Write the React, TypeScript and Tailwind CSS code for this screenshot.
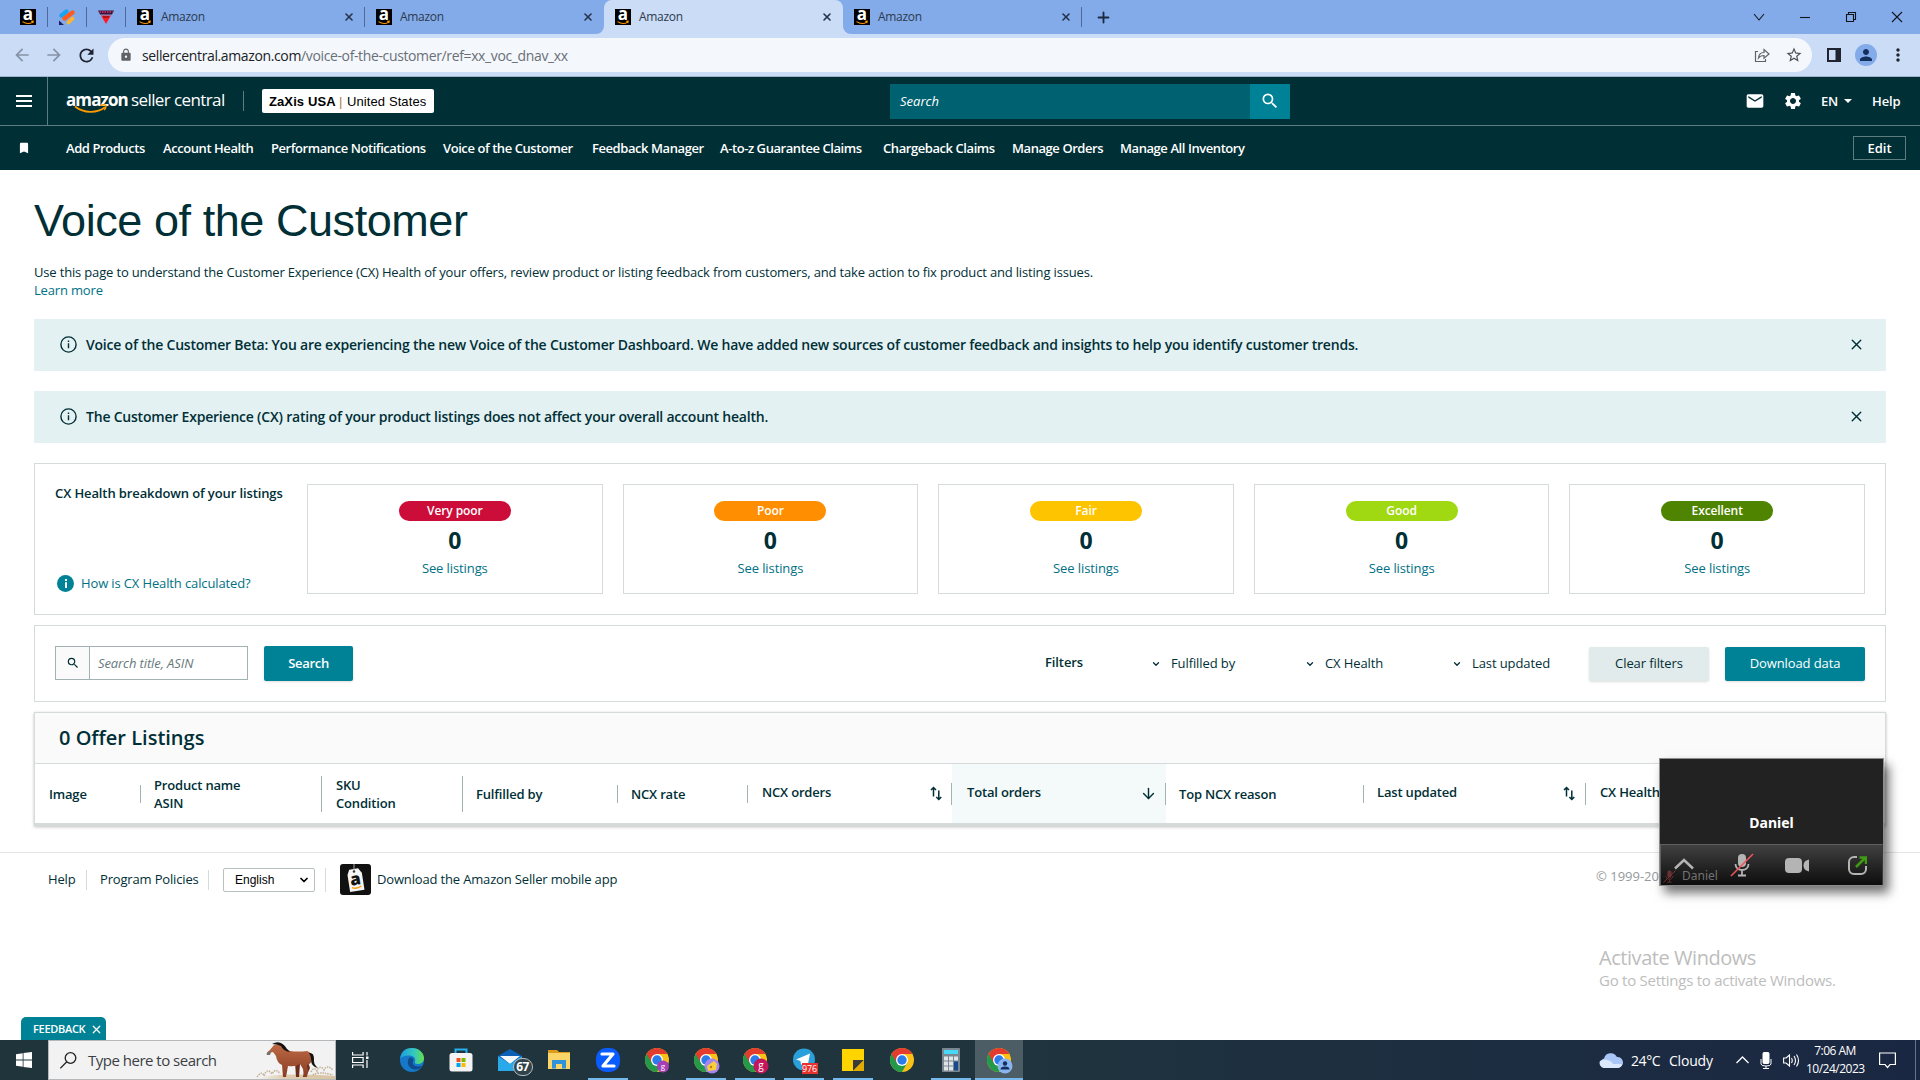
import type { ReactNode } from "react";
import { ArrowDown, ChevronDown, Plus, X } from "lucide-react";
import { MdArrowBack, MdArrowForward, MdBookmark, MdEmail, MdLock, MdMoreVert, MdPerson, MdRefresh, MdSearch, MdSettings, MdStarBorder } from "react-icons/md";

const NAV = [
  { label: "Add Products", cls: "w-[97px]" },
  { label: "Account Health", cls: "w-[108px]" },
  { label: "Performance Notifications", cls: "w-[172px]" },
  { label: "Voice of the Customer", cls: "w-[149px]" },
  { label: "Feedback Manager", cls: "w-[128px]" },
  { label: "A-to-z Guarantee Claims", cls: "w-[163px]" },
  { label: "Chargeback Claims", cls: "w-[129px]" },
  { label: "Manage Orders", cls: "w-[108px]" },
  { label: "Manage All Inventory", cls: "w-[130px]" },
];

const RATINGS = [
  { label: "Very poor", color: "bg-[#cc0c39]" },
  { label: "Poor", color: "bg-[#ff8f00]" },
  { label: "Fair", color: "bg-[#ffc400]" },
  { label: "Good", color: "bg-[#a0d911]" },
  { label: "Excellent", color: "bg-[#4f8400]" },
];

function AmazonFavicon() {
  return (
    <svg className="shrink-0 overflow-visible" width="16" height="16" viewBox="0 0 16 16" fill="none">
      <rect width="16" height="16" fill="#000" />
      <text x="8" y="11" textAnchor="middle" fontSize="17" fontWeight="700" fontFamily="Open Sans" fill="#fff">a</text>
      <path d="M2.500 12.600c3.200 2.200 7.400 2.300 10.400.5M11.200 12.400l2-.2-.4 1.900" stroke="#f90" strokeWidth="1.100" />
    </svg>
  );
}

function Tab({ active = false, divider = false }: { active?: boolean; divider?: boolean }) {
  return (
    <div className={active ? "relative flex h-[34px] w-[239px] items-center rounded-t-lg bg-[#cbdcf6] pl-[11px]" : "relative flex h-[34px] w-[239px] items-center pl-[11px]"}>
      <AmazonFavicon />
      <span className="ml-2 flex-1 text-[12px] tracking-[-0.3px] text-[#2b3a4f]">Amazon</span>
      <X size={12} strokeWidth={3.2} className="mr-[10px] text-[#24344a]" />
      {divider && <span className="absolute top-[7px] right-0 h-5 w-px bg-[#4f6a9a]" />}
      {active && (
        <>
          <svg className="absolute bottom-0 -left-2" width="8" height="8" viewBox="0 0 8 8"><path d="M8 0v8H0a8 8 0 0 0 8-8z" fill="#cbdcf6" /></svg>
          <svg className="absolute -right-2 bottom-0" width="8" height="8" viewBox="0 0 8 8"><path d="M0 0v8h8a8 8 0 0 1-8-8z" fill="#cbdcf6" /></svg>
        </>
      )}
    </div>
  );
}

function PinnedTab({ children }: { children: ReactNode }) {
  return <div className="flex h-5 w-[39px] items-center justify-center border-r border-[#4f6a9a]">{children}</div>;
}

function TabStrip() {
  return (
    <div className="flex h-[34px] items-center bg-[#84abe9]">
      <div className="ml-[9px] flex">
        <PinnedTab><AmazonFavicon /></PinnedTab>
        <PinnedTab>
          <svg width="16" height="16" viewBox="0 0 16 16">
            <path d="M2.500 6.500 7.500 2.500" stroke="#18a4f5" strokeWidth="4.400" strokeLinecap="round" />
            <path d="m5.500 9.500 8-6" stroke="#ff5a1f" strokeWidth="4.400" strokeLinecap="round" />
            <path d="m9.500 13.500 4-4" stroke="#ffb52e" strokeWidth="3.800" strokeLinecap="round" />
            <path d="M0 11.500 5 16H0z" fill="#1b1c63" />
          </svg>
        </PinnedTab>
        <PinnedTab>
          <svg width="16" height="16" viewBox="0 0 16 16">
            <path d="M0 1.500h16l-2 4H2z" fill="#37133a" />
            <path d="M1.500 3h13" stroke="#e4356b" strokeWidth="1.500" strokeDasharray="1.500 1" />
            <path d="M3 6.500h10L8 15z" fill="#ff1a24" />
            <path d="M5 8h6" stroke="#5d0f14" strokeWidth="1" />
          </svg>
        </PinnedTab>
      </div>
      <Tab divider />
      <Tab />
      <Tab active />
      <Tab divider />
      <Plus size={17} strokeWidth={2.6} className="ml-[13px] text-[#1b2a40]" />
      <svg className="mr-1 ml-auto" width="168" height="28" viewBox="0 0 168 28" fill="none" stroke="#10151d" strokeWidth="1.100">
        <path d="m6 11 5 6 5-6" />
        <path d="M52 14.500h10" />
        <path d="M98.500 11.500h7v7h-7zM100.500 11.500v-2h7v7h-2" />
        <path d="m144 9 10 10M154 9l-10 10" />
      </svg>
    </div>
  );
}

function AddressBar() {
  return (
    <div className="flex h-[43px] items-center border-b border-[#9fb3cb] bg-[#cbdcf6] text-[#1f2430]">
      <MdArrowBack size={20} className="ml-3 text-[#8792a5]" />
      <MdArrowForward size={20} className="ml-3 text-[#8792a5]" />
      <MdRefresh size={21} className="ml-[12px]" />
      <div className="ml-[11px] flex h-[34px] w-[1704px] items-center rounded-full bg-[#f4f8fd] pl-[11px] text-[14px]">
        <MdLock size={14} className="text-[#5f6368]" />
        <span className="ml-[9px] tracking-[-0.37px] text-[#202124]">
          sellercentral.amazon.com<span className="text-[#6a6f76]">/voice-of-the-customer/ref=xx_voc_dnav_xx</span>
        </span>
        <svg className="ml-auto" width="16" height="16" viewBox="0 0 16 16" fill="none" stroke="#5f6368" strokeWidth="1.200">
          <path d="M4 4.500H1.500v10h10V12" />
          <path d="M4.500 11c.3-3.600 2.200-5.400 5.500-5.500V2.500L15 7l-5 4.300V8.500c-2.500 0-4.200.7-5.500 2.500z" />
        </svg>
        <MdStarBorder size={18} className="mr-[9px] ml-[15px] text-[#4d5258]" />
      </div>
      <svg className="ml-[15px]" width="14" height="14" viewBox="0 0 14 14">
        <path d="M1 1h12v12H1z" fill="none" stroke="#1f2430" strokeWidth="2" />
        <path d="M8.500 0H14v14H8.500z" fill="#1f2430" />
      </svg>
      <span className="ml-[14px] flex h-[22px] w-[22px] items-center justify-center rounded-full bg-[#84abe9]">
        <MdPerson size={18} className="text-[#14305e]" />
      </span>
      <MdMoreVert size={20} className="ml-[11px]" />
    </div>
  );
}

function SellerHeader() {
  return (
    <header className="bg-[#002f36] font-['Open_Sans',sans-serif] text-white">
      <div className="flex h-[49px] items-center border-b border-[#5b7d80]">
        <div className="flex h-full w-12 items-center border-r border-[#5b7d80] pl-4">
          <div className="flex w-4 flex-col gap-[3px]">
            <span className="h-[2px] bg-white" />
            <span className="h-[2px] bg-white" />
            <span className="h-[2px] bg-white" />
          </div>
        </div>
        <div className="relative ml-[18px] flex w-[160px] items-baseline pb-[3px] text-[17px] whitespace-nowrap">
          <span className="w-[65px] font-bold tracking-[-0.9px]">amazon</span>
          <span className="tracking-[-0.6px]">seller central</span>
          <svg className="absolute top-[17px] left-[8px]" width="36" height="12" viewBox="0 0 36 12" fill="none" stroke="#f90" strokeWidth="1.800">
            <path d="M1 2.500c9 7 22 7 30 .8" />
            <path d="M26.500 1.500c2.200-.8 4.300-.9 5.300-.2.500 1.200-.2 3-1.500 4.800" strokeWidth="1.400" />
          </svg>
        </div>
        <span className="ml-[17px] h-5 w-px bg-[#5b7d80]" />
        <div className="ml-[18px] flex h-6 w-[172px] items-center rounded-[2px] bg-white pt-px pl-[7px] font-['Liberation_Sans',Arial,sans-serif] text-[13px] whitespace-nowrap text-black">
          <b className="w-[70px] tracking-[0.1px]">ZaXis USA</b>
          <span className="w-[8px] text-[#b07a45]">|</span>
          <span className="tracking-[0.1px]">United States</span>
        </div>
        <div className="ml-[456px] flex h-[35px] w-[360px] items-center bg-[#006170] pt-px pl-[10px] text-[13px] text-white italic">Search</div>
        <div className="flex h-[35px] w-10 items-center justify-center bg-[#008296]"><MdSearch size={20} /></div>
        <MdEmail size={20} className="ml-[455px]" />
        <MdSettings size={20} className="ml-[18px]" />
        <span className="ml-[18px] w-[18px] pt-[2px] text-[13px] font-semibold tracking-[-0.2px]">EN</span>
        <span className="ml-[5px] border-x-4 border-t-4 border-x-transparent border-t-white" />
        <span className="ml-[20px] pt-[2px] text-[13px] font-semibold tracking-[-0.1px]">Help</span>
      </div>
      <div className="flex h-11 items-center text-[13px] font-semibold">
        <MdBookmark size={14} className="ml-[17px]" />
        <nav className="ml-[35px] flex pt-[2px] whitespace-nowrap">
          {NAV.map((n) => (
            <span key={n.label} className={`${n.cls} tracking-[-0.43px]`}>{n.label}</span>
          ))}
        </nav>
        <span className="mr-[14px] ml-auto flex h-6 w-[53px] items-center justify-center border border-[#5b7d80] pt-px">Edit</span>
      </div>
    </header>
  );
}

function InfoCircle() {
  return (
    <svg width="17" height="17" viewBox="0 0 17 17" fill="none" stroke="#002f36" strokeWidth="1.400">
      <circle cx="8.500" cy="8.500" r="7.600" />
      <path d="M8.500 7.300v5M8.500 4.500v1.500" />
    </svg>
  );
}

function Notice({ children }: { children: ReactNode }) {
  return (
    <div className="flex h-[52px] items-center bg-[#e4f1f3] pr-[21px] pb-[2px] pl-[26px] text-[14px] font-semibold">
      <InfoCircle />
      <span className="ml-[9px] flex-1 pt-px tracking-[-0.21px]">{children}</span>
      <X size={17} strokeWidth={1.9} />
    </div>
  );
}

function Breakdown() {
  return (
    <section className="mt-5 flex h-[152px] border border-[#d5dbdb] pt-5 pr-5 pl-5">
      <div className="flex h-[109px] w-[252px] flex-col justify-between text-[13px]">
        <p className="tracking-[-0.11px] font-semibold">CX Health breakdown of your listings</p>
        <p className="flex items-center gap-[7px] tracking-[-0.13px] text-[#007185]">
          <span className="ml-[2px] flex h-[17px] w-[17px] items-center justify-center rounded-full bg-[#008296]">
            <svg width="4" height="9" viewBox="0 0 4 9" fill="#fff"><path d="M1 0h2v2H1zM1 3.200h2V9H1z" /></svg>
          </span>
          How is CX Health calculated?
        </p>
      </div>
      <div className="flex h-[110px] flex-1 gap-5">
        {RATINGS.map((r) => (
          <div key={r.label} className="flex flex-1 flex-col items-center border border-[#d5dbdb] pt-4">
            <span className={`${r.color} flex h-5 w-28 items-center justify-center rounded-[10px] text-[12px] font-semibold tracking-[-0.1px] text-white`}>{r.label}</span>
            <span className="mt-[3px] text-[23px] leading-8 font-bold">0</span>
            <span className="mt-[2px] text-[13px] leading-5 tracking-[-0.1px] text-[#007185]">See listings</span>
          </div>
        ))}
      </div>
    </section>
  );
}

function Filters() {
  return (
    <section className="mt-[10px] flex h-[77px] items-center border border-[#d5dbdb] px-5 text-[13px] tracking-[-0.1px]">
      <div className="mb-px flex h-[34px] w-[193px] border border-[#a3b1b3]">
        <span className="flex w-[34px] items-center justify-center border-r border-[#a3b1b3] bg-[#fafafa]"><MdSearch size={14} /></span>
        <span className="flex flex-1 items-center pt-px pl-2 tracking-[-0.1px] text-[#66797c] italic">Search title, ASIN</span>
      </div>
      <button className="ml-4 h-[35px] w-[89px] rounded-[2px] bg-[#008296] font-semibold tracking-[-0.3px] text-white shadow-sm">Search</button>
      <b className="mr-[67px] mb-px ml-auto w-[39px] font-semibold">Filters</b>
      <span className="flex w-[154px] items-center gap-[10px] pt-px"><ChevronDown size={10} strokeWidth={3} />Fulfilled by</span>
      <span className="flex w-[147px] items-center gap-[10px] pt-px"><ChevronDown size={10} strokeWidth={3} />CX Health</span>
      <span className="flex w-[137px] items-center gap-[10px] pt-px"><ChevronDown size={10} strokeWidth={3} />Last updated</span>
      <button className="h-[34px] w-[120px] rounded-[2px] bg-[#e2ebeb] pt-px shadow-sm">Clear filters</button>
      <button className="ml-4 h-[34px] w-[140px] rounded-[2px] bg-[#008296] pt-px font-medium text-white shadow-sm">Download data</button>
    </section>
  );
}

function SortIcon() {
  return (
    <svg width="12" height="15" viewBox="0 0 12 15" fill="none" stroke="#002f36" strokeWidth="1.500">
      <path d="M3.500 10.500V1.500M1 4l2.500-2.500L6 4M8.800 4.500v9M6.300 11l2.500 2.500 2.500-2.500" />
    </svg>
  );
}

function Listings() {
  return (
    <section className="mt-[10px] h-[114px] border border-b-[3px] border-[#d5dbdb] shadow-[0_1px_3px_rgba(0,0,0,0.25)]">
      <h2 className="flex h-[51px] items-center border-b border-[#d5dbdb] bg-[#fafafa] pl-6 text-[20px] font-semibold">0 Offer Listings</h2>
      <div className="grid h-[59px] grid-cols-[106px_181px_141px_155px_130px_204px_214px_198px_222px_1fr] items-center text-[13px] leading-[18px] font-semibold tracking-[-0.18px]">
        <div className="flex h-[18px] items-center border-r border-[#a3b1b3] pl-[14px]">Image</div>
        <div className="flex h-9 items-center border-r border-[#a3b1b3] pl-[13px]">Product name<br />ASIN</div>
        <div className="flex h-9 items-center border-r border-[#a3b1b3] pl-[14px]">SKU<br />Condition</div>
        <div className="flex h-[18px] items-center border-r border-[#a3b1b3] pl-[13px]">Fulfilled by</div>
        <div className="flex h-[18px] items-center border-r border-[#a3b1b3] pl-[13px]">NCX rate</div>
        <div className="flex h-[22px] items-center justify-between border-r border-[#a3b1b3] pr-[9px] pl-[14px]"><span className="pb-[3px]">NCX orders</span><SortIcon /></div>
        <div className="flex h-full items-center bg-[#f4f9fa]">
          <div className="flex h-[22px] flex-1 items-center justify-between border-r border-[#a3b1b3] pr-[8px] pl-[15px]"><span className="pb-[3px]">Total orders</span><ArrowDown size={17} strokeWidth={2} /></div>
        </div>
        <div className="flex h-[18px] items-center border-r border-[#a3b1b3] pl-[13px]">Top NCX reason</div>
        <div className="flex h-[22px] items-center justify-between border-r border-[#a3b1b3] pr-[10px] pl-[13px]"><span className="pb-[3px]">Last updated</span><SortIcon /></div>
        <div className="pb-[3px] pl-[14px]">CX Health</div>
      </div>
    </section>
  );
}

function Footer() {
  return (
    <footer className="mt-[26px] flex h-[54px] items-center border-t border-[#e3e6e6] pl-12 text-[13px] tracking-[-0.16px]">
      <span className="flex h-5 w-[39px] items-center border-r border-[#d5dbdb]">Help</span>
      <span className="flex h-5 w-[122px] items-center border-r border-[#d5dbdb] pl-[13px]">Program Policies</span>
      <span className="ml-[14px] flex h-6 w-[92px] items-center justify-between rounded-[2px] border border-[#b9c0c0] pr-1 pl-[11px] font-['Liberation_Sans',Arial,sans-serif] text-[12px] tracking-normal text-black">
        English<ChevronDown size={12} strokeWidth={3.5} />
      </span>
      <span className="mr-[14px] ml-[10px] h-6 w-px bg-[#d5dbdb]" />
      <svg width="31" height="31" viewBox="0 0 31 31">
        <rect width="31" height="31" rx="3" fill="#111" />
        <g transform="rotate(-9 15 17)">
          <path d="m11 5 9 0 3 5v17H8.500V10z" fill="#f5f5f5" />
          <circle cx="15.500" cy="7.500" r="1.300" fill="#333" />
          <text x="15.500" y="21" textAnchor="middle" fontSize="17" fontWeight="800" fontFamily="Open Sans" fill="#111">a</text>
          <path d="M11 23c3 1.800 6 1.800 9.500 0" stroke="#f90" strokeWidth="1.300" fill="none" />
        </g>
        <path d="M14 0v6" stroke="#aaa" strokeWidth="1" />
      </svg>
      <span className="ml-[6px] w-[241px] whitespace-nowrap">Download the Amazon Seller mobile app</span>
      <span className="mb-[5px] ml-[978px] whitespace-nowrap tracking-normal text-[#949a9c]">© 1999-20</span>
    </footer>
  );
}

function MutedMic({ size, className, color = "#b4b4b4" }: { size: number; className?: string; color?: string }) {
  return (
    <svg className={className} width={size} height={size} viewBox="0 0 24 24" fill="none">
      <rect x="8" y="1" width="8" height="13" rx="4" fill={color} />
      <path d="M5.500 11c0 8 13 8 13 0M12 17v5M8 22.500h8" stroke={color} strokeWidth="1.800" />
      <path d="M1 23 23 1" stroke="#f0535b" strokeWidth="1.600" />
    </svg>
  );
}

function MeetingWindow() {
  return (
    <div className="absolute top-[758px] left-[1659px] flex h-[128px] w-[225px] flex-col border border-[#8d8d8d] bg-[#222] font-['Noto_Sans',sans-serif] shadow-[5px_7px_10px_rgba(0,0,0,0.55)]">
      <div className="flex flex-1 items-end justify-center pb-[11px] text-[14px] font-bold text-white">Daniel</div>
      <div className="relative flex h-[41px] items-center border border-b-0 border-[#606060] border-r-[#3a3a3a] bg-linear-to-b from-[#414141] to-[#0e0e0e]">
        <svg className="mb-[3px] ml-[13px]" width="20" height="12" viewBox="0 0 20 12" fill="none" stroke="#b4b4b4" strokeWidth="2.500"><path d="m1 10.500 9-8.500 9 8.500" /></svg>
        <MutedMic size={24} className="ml-[36px]" />
        <svg className="ml-[31px]" width="25" height="15" viewBox="0 0 25 15" fill="#b4b4b4"><rect width="17" height="15" rx="4" /><path d="M24 1.500v12c-4-1-5.500-3-5.500-6s1.500-5 5.500-6z" /></svg>
        <svg className="ml-[38px]" width="19" height="19" viewBox="0 0 19 19" fill="none" strokeWidth="2">
          <path d="M9 1H6a5 5 0 0 0-5 5v7a5 5 0 0 0 5 5h7a5 5 0 0 0 5-5v-3" stroke="#b4b4b4" />
          <path d="m8 11 9-9M11.500 1.500H18V8" stroke="#3f9a14" strokeWidth="2.500" />
        </svg>
        <div className="absolute bottom-0 left-[2px] flex items-center gap-[6px] text-[12px] opacity-50">
          <MutedMic size={13} color="#b8444a" />
          <span className="text-[#c8c8c8]">Daniel</span>
        </div>
      </div>
    </div>
  );
}

function Chrome({ children }: { children?: ReactNode }) {
  return (
    <svg width="28" height="28" viewBox="0 0 28 28">
      <circle cx="14" cy="14" r="12" fill="#fbc116" />
      <path d="M3.600 8A12 12 0 0 0 14 26l5.200-9z" fill="#229a49" />
      <path d="M14 8h10.400L19 17z" fill="#fbc116" />
      <path d="M3.600 8A12 12 0 0 1 24.400 8H14l-5.200 9z" fill="#e33b2e" />
      <circle cx="14" cy="14" r="6" fill="#fff" />
      <circle cx="14" cy="14" r="4.700" fill="#2b7bea" />
      {children}
    </svg>
  );
}

function Task({ open = false, active = false, children }: { open?: boolean; active?: boolean; children: ReactNode }) {
  return (
    <div className={active ? "flex h-10 w-12 flex-col items-center justify-end bg-[#4d5d66]" : "flex h-10 w-[49px] flex-col items-center justify-end"}>
      <div className="flex flex-1 items-center pt-[2px]">{children}</div>
      <span className={active ? "h-[2px] w-full bg-[#76b9ed]" : open ? "h-[2px] w-10 bg-[#76b9ed]" : "h-[2px]"} />
    </div>
  );
}

function Horse() {
  return (
    <svg width="80" height="37" viewBox="0 0 80 37">
      <defs>
        <linearGradient id="coat" x1="0" y1="0" x2="0" y2="1"><stop offset="0" stopColor="#bd6a45" /><stop offset="1" stopColor="#8a3d24" /></linearGradient>
        <linearGradient id="ground" x1="0" x2="1"><stop offset="0" stopColor="#f2f2f2" /><stop offset=".35" stopColor="#dfcdb2" /><stop offset="1" stopColor="#d9c4a2" /></linearGradient>
      </defs>
      <path d="M2 37q16-7 78-3v3z" fill="url(#ground)" />
      <path d="M2 35q5-7 7-1 3-9 8-2 4-7 8 0M56 30q3-6 6-1 3-7 7-1 3-6 9 0M58 33q6-4 20 0" stroke="#c3b096" fill="none" strokeWidth="1.600" strokeDasharray="1.500 1" />
      <path d="m40 20 1 15h3l1-13zM53 20l2 6-4 9h-3l2-9-3-5z" fill="#6b2d1a" />
      <path d="M12 13q-1-2 2-4l5-6q5-2 9 1 4 4 7 5 8 1 17 0 6 2 5 9-1 4-5 5l1 6-1 6h-3l-1-8-3-5q-4 3-12 2l-2 11h-3l-1-12q-5-2-6-9l-3-4q-3 0-6 3-2 0-3 0z" fill="url(#coat)" />
      <path d="M12 13q-1-2 2-4l2 1-1 3z" fill="#77706c" />
      <path d="M17 2q9-5 15 5l3 3q-7-1-9-6-4-2-9-2z" fill="#141110" />
      <path d="M54 11q5-1 5 6-1 5 4 9-7-1-7-9 0-3-2-6z" fill="#141110" />
    </svg>
  );
}

function Taskbar() {
  return (
    <div className="flex h-10 items-center bg-linear-to-r from-[#20343c] via-[#20343e] to-[#1a2742] text-white">
      <svg className="ml-4" width="16" height="16" viewBox="0 0 16 16" fill="#fff">
        <path d="m0 2.200 6.700-.9v6.300H0zM7.500 1.100 16 0v7.600H7.500zM0 8.400h6.700v6.300L0 13.800zM7.500 8.400H16V16l-8.500-1.100z" />
      </svg>
      <div className="ml-4 flex h-10 w-72 items-center border border-[#b4b8ba] bg-[#f2f2f2] pl-[11px] text-[15px] text-[#3b3f45]">
        <svg width="17" height="17" viewBox="0 0 17 17" fill="none" stroke="#222" strokeWidth="1.300"><circle cx="10.500" cy="6" r="5.300" /><path d="m6.800 9.800-6.500 6.500" /></svg>
        <span className="ml-[11px] w-[130px] pt-px tracking-[-0.5px] whitespace-nowrap">Type here to search</span>
        <span className="ml-auto"><Horse /></span>
      </div>
      <div className="flex h-10 w-[51px] items-center pl-4">
        <svg width="17" height="16" viewBox="0 0 17 16" fill="none" stroke="#fff" strokeWidth="1.200"><path d="M.600 0v3h10.500V0M.600 16v-3h10.500v3M.600 5.500h10.500v5H.600zM15 0v3.500M15 8v8" /><path d="M14 4.500h2.500v2.500H14z" fill="#fff" stroke="none" /></svg>
      </div>
      <Task>
        <svg width="24" height="24" viewBox="0 0 24 24">
          <defs>
            <linearGradient id="edgeTop" x1="0" x2="1"><stop offset="0" stopColor="#1b9de2" /><stop offset=".6" stopColor="#35c9bd" /><stop offset="1" stopColor="#66de4c" /></linearGradient>
          </defs>
          <circle cx="12" cy="12" r="12" fill="#1578c9" />
          <path d="M0 11C1 3 6 0 12 0c7 0 12 5 12 10 0 4-3 6-6.500 6-2 0-3.500-1-2.500-2.500C16 11 14 7.500 9.500 7.500 5 7.500 1 9 0 11z" fill="url(#edgeTop)" />
          <path d="M9 10c-3 5 0 11 6 11.500 3 .2 6-1.500 7.500-4-3 1.500-8 1.500-9.500-1.500-.8-2 .5-3.500.5-4.500C13 10 10 9 9 10z" fill="#114a8b" />
        </svg>
      </Task>
      <Task>
        <svg width="24" height="24" viewBox="0 0 24 24">
          <path d="M6.500 6V1.500h11V6" fill="none" stroke="#26b0ee" strokeWidth="2" />
          <rect x=".5" y="5" width="23" height="18.500" rx="2.500" fill="#f3f3f3" />
          <path d="M7.500 10h4v4h-4z" fill="#f25022" /><path d="M12.500 10h4v4h-4z" fill="#7fba00" /><path d="M7.500 15h4v4h-4z" fill="#00a4ef" /><path d="M12.500 15h4v4h-4z" fill="#ffb900" />
        </svg>
      </Task>
      <Task>
        <div className="relative">
          <svg width="24" height="22" viewBox="0 0 24 22"><path d="m0 7 12-7 12 7v15H0z" fill="#0c60b5" /><path d="M2 7h20l-10 8z" fill="#f4f8fb" /><path d="m0 7 12 8 12-8v15H0z" fill="#29a9ea" /></svg>
          <span className="absolute top-[9px] left-[15px] flex h-[18px] w-[20px] items-center justify-center rounded-full border border-[#b7bec2] bg-[#31434b] text-[12px] font-bold tracking-[-0.5px]">67</span>
        </div>
      </Task>
      <Task>
        <svg width="22" height="20" viewBox="0 0 22 20"><path d="M0 0h9l2 2h11v17H0z" fill="#dc9b18" /><path d="M0 3h22v16H0z" fill="#fbd567" /><path d="M4 10h14v8.500h-4V14H8v4.500H4z" fill="#2f93dc" /></svg>
      </Task>
      <Task open>
        <svg width="24" height="24" viewBox="0 0 24 24"><rect width="24" height="24" rx="10" fill="#0b5cff" /><path d="M6 6h11L7 18h11" fill="none" stroke="#fff" strokeWidth="3.200" strokeLinejoin="round" strokeLinecap="round" /></svg>
      </Task>
      <Task><Chrome><circle cx="20" cy="20.500" r="6" fill="#a63fb4" /><text x="20" y="23" fontSize="8" textAnchor="middle" fill="#fff">g</text></Chrome></Task>
      <Task open><Chrome><circle cx="20" cy="20" r="7.500" fill="#a785ee" /><path d="m15 20 7-5 3 3-1 6-8 1z" fill="#f7ce3c" /><circle cx="19" cy="21" r="1.200" fill="#b98208" /></Chrome></Task>
      <Task open><Chrome><circle cx="20" cy="20" r="7.500" fill="#c2185b" /><text x="20" y="23" fontSize="10" textAnchor="middle" fill="#fff">g</text></Chrome></Task>
      <Task open>
        <div className="relative">
          <svg width="24" height="24" viewBox="0 0 24 24"><circle cx="12" cy="11.500" r="11" fill="#29a0da" /><path d="m4 11.500 14-6-2.500 13-4.500-3.500-2 2-.5-4z" fill="#fff" /></svg>
          <span className="absolute top-[15px] left-[10px] flex h-[11px] w-4 items-center justify-center bg-[#e8322d] text-[9px] tracking-[-0.2px]">976</span>
        </div>
      </Task>
      <Task open>
        <svg width="22" height="22" viewBox="0 0 22 22"><path d="M0 0h22v22H0z" fill="#ffd400" /><path d="M11 22V11h11z" fill="#3b3a3a" /><path d="M11 22 22 11v11z" fill="#e0ac00" /></svg>
      </Task>
      <Task><Chrome /></Task>
      <Task open>
        <svg width="18" height="24" viewBox="0 0 18 24"><rect width="18" height="24" rx="1" fill="#7b8790" /><path d="M2 2h14v4H2z" fill="#46d8f5" /><path d="M2 8.500h4v4H2zM7 8.500h4v4H7zM12 8.500h4v4h-4zM2 13.500h4v4H2zM7 13.500h4v4H7zM2 18.500h4v4H2zM7 18.500h4v4H7z" fill="#dfe4e8" /><path d="M12 13.500h4v9h-4z" fill="#164a8c" /></svg>
      </Task>
      <Task active><Chrome><circle cx="20" cy="20" r="7.500" fill="#8ab4f0" /><circle cx="20" cy="17.500" r="2.200" fill="#14305e" /><path d="M15.500 23.500q0-3 4.500-3t4.500 3z" fill="#14305e" /></Chrome></Task>
      <div className="ml-auto flex h-10 items-center">
        <svg width="24" height="16" viewBox="0 0 24 16"><path d="M5 16a5 5 0 0 1 0-9.500A7 7 0 0 1 18 5a5.500 5.500 0 0 1 1 11z" fill="#a9c6f6" /><path d="M5 16a5 5 0 0 1-4-7c5-3 12 0 13 3h9a5 5 0 0 1-4 4z" fill="#dce9fd" /></svg>
        <span className="ml-2 w-[38px] text-[14px] tracking-[-0.4px]">24°C</span>
        <span className="w-[67px] text-[14px] tracking-[-0.2px]">Cloudy</span>
        <svg width="13" height="8" viewBox="0 0 13 8" fill="none" stroke="#fff" strokeWidth="1.300"><path d="m.500 7 6-6 6 6" /></svg>
        <svg className="ml-[11px]" width="12" height="17" viewBox="0 0 12 17" fill="none" stroke="#fff"><rect x="3" y=".5" width="6" height="11" rx="1" fill="#fff" /><path d="M1 7v5q0 2 5 2t5-2V7M6 14v2M3 16.500h6" /></svg>
        <svg className="ml-[11px]" width="17" height="15" viewBox="0 0 17 15" fill="none" stroke="#fff" strokeWidth="1.100"><path d="M.600 5h2.500L6.500 2v11L3.100 10H.600zM8.500 5q1.500 2.500 0 5M11 3q3 4.500 0 9M13.500 1.500q4 6 0 12" /></svg>
        <div className="ml-[6px] w-[58px] text-center text-[12px] leading-[18px] tracking-[-0.5px] whitespace-nowrap">7:06 AM<br />10/24/2023</div>
        <svg className="ml-[15px]" width="17" height="17" viewBox="0 0 17 17" fill="none" stroke="#fff" strokeWidth="1.200"><path d="M.600 1h15.800v11.500h-5.400l-2.500 3-2.500-3H.600z" /></svg>
        <span className="mr-1 ml-[19px] h-10 w-px bg-[#66728a]" />
      </div>
    </div>
  );
}

export default function App() {
  return (
    <div className="relative flex h-[1080px] w-[1920px] flex-col overflow-hidden bg-white font-['Open_Sans','Noto_Sans',sans-serif] text-[#002f36]">
      <TabStrip />
      <AddressBar />
      <SellerHeader />
      <main className="flex-1">
        <div className="mx-[34px]">
          <h1 className="pt-[24px] font-['Liberation_Sans',Arial,sans-serif] text-[45px] leading-[54px] tracking-[-0.44px]">Voice of the Customer</h1>
          <p className="mt-[15px] mb-5 text-[13px] leading-[18px] tracking-[-0.165px]">
            <span>Use this page to understand the Customer Experience (CX) Health of your offers, review product or listing feedback from customers, and take action to fix product and listing issues.</span>
            <br />
            <span className="text-[#007185]">Learn more</span>
          </p>
          <div className="flex flex-col gap-5">
            <Notice>Voice of the Customer Beta: You are experiencing the new Voice of the Customer Dashboard. We have added new sources of customer feedback and insights to help you identify customer trends.</Notice>
            <Notice>The Customer Experience (CX) rating of your product listings does not affect your overall account health.</Notice>
          </div>
          <Breakdown />
          <Filters />
          <Listings />
        </div>
        <Footer />
      </main>
      <div className="ml-[21px] flex h-[23px] w-[85px] items-center rounded-t-[5px] bg-[#008296] pt-px pl-3 text-[11px] font-semibold text-white">
        <span className="w-[57px] tracking-[-0.3px]">FEEDBACK</span><X size={13} strokeWidth={2.2} />
      </div>
      <Taskbar />
      <MeetingWindow />
      <div className="absolute top-[945px] left-[1599px] whitespace-nowrap text-[#bdbdbd]">
        <p className="text-[20px] leading-[26px] tracking-[-0.45px]">Activate Windows</p>
        <p className="-mt-px text-[15px] leading-5 tracking-[-0.26px]">Go to Settings to activate Windows.</p>
      </div>
    </div>
  );
}
